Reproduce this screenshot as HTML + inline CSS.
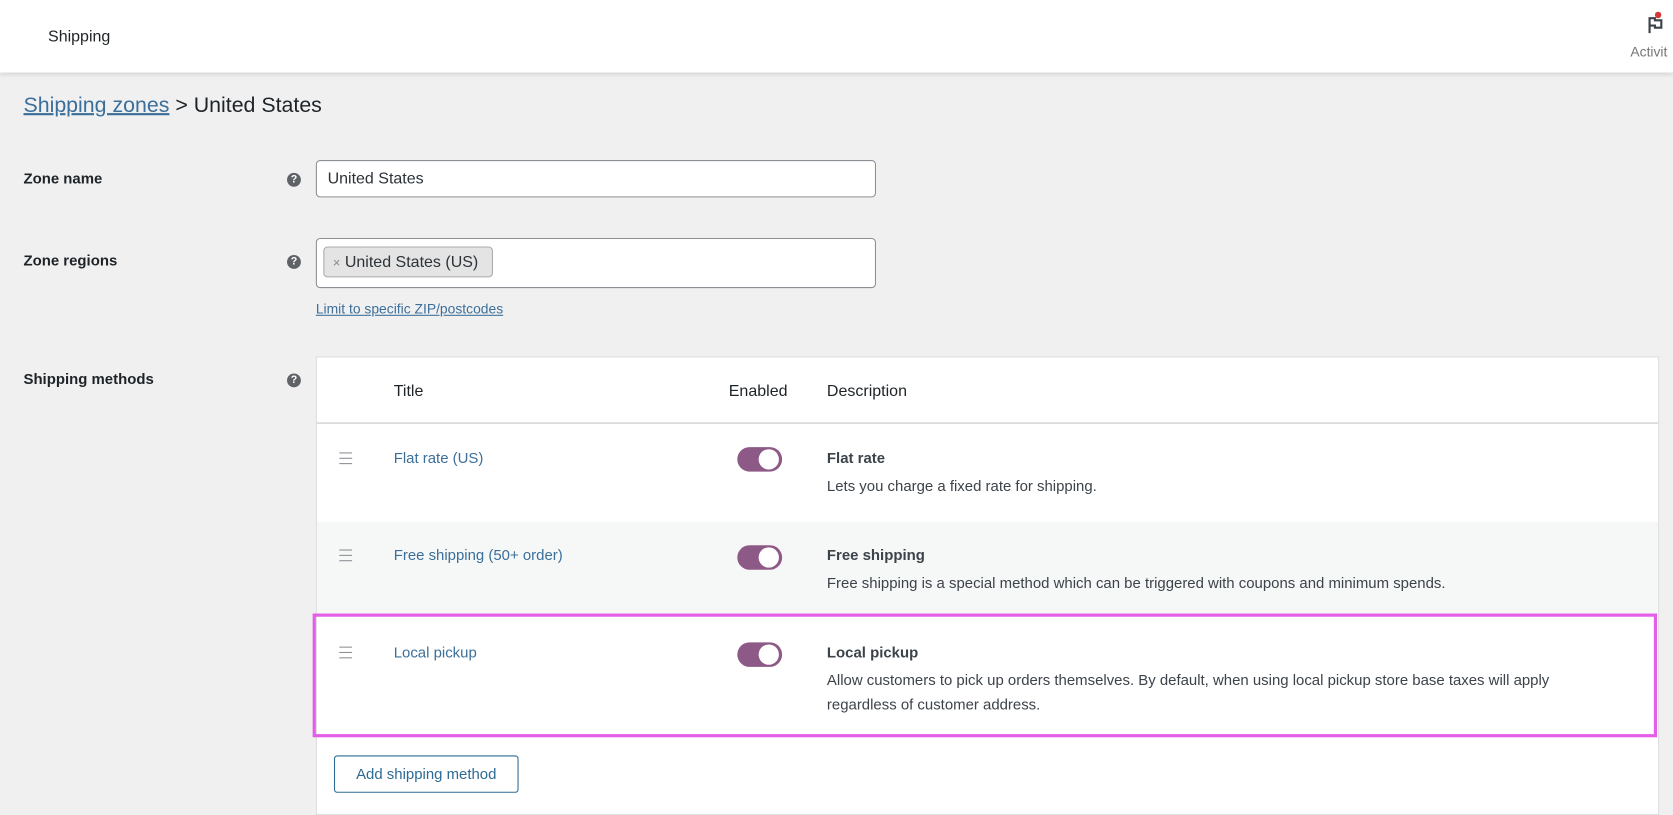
<!DOCTYPE html>
<html><head><meta charset="utf-8"><style>
html,body{margin:0;padding:0;width:1673px;height:809px;overflow:hidden;background:#f0f0f1}
#w{position:absolute;left:0;top:0;width:1568px;height:758px;transform:scale(1.067);transform-origin:0 0;font-family:"Liberation Sans",sans-serif;color:#1d2327}
.a{position:absolute}
.hdr{left:0;top:0;width:1568px;height:68px;background:#fff;box-shadow:0 2px 4px rgba(0,0,0,.12)}
.lbl{font-size:14px;font-weight:bold;color:#1d2327}
.q{width:13px;height:13px;border-radius:50%;background:#5f6368;color:#fff;font-size:10px;font-weight:bold;text-align:center;line-height:13px}
.inp{background:#fff;border:1px solid #8c8f94;border-radius:4px;box-sizing:border-box}
.tl{font-size:14px;color:#3b6f9a}
.dt{font-size:14px;font-weight:bold;color:#3c434a}
.dd{font-size:14px;color:#3c434a;line-height:23px}
.tg{width:42px;height:23px;border-radius:12px;background:#8d5a87}
.tg:after{content:"";position:absolute;right:3px;top:2px;width:19px;height:19px;border-radius:50%;background:#fff}
.dr{width:12px;height:9px;border-top:1.5px solid #8c8f94;border-bottom:1.5px solid #8c8f94}
.dr:after{content:"";position:absolute;left:0;right:0;top:3.5px;height:1.5px;background:#8c8f94}
</style></head><body><div id="w">
<div class="a hdr"></div>
<div class="a" style="left:45px;top:26px;font-size:15px">Shipping</div>
<svg class="a" style="left:1540px;top:8px" width="24" height="26" viewBox="0 0 24 26"><path d="M6 8v15M6 9h5v2h6v7h-6v-2H6" fill="none" stroke="#3c434a" stroke-width="2"/><circle cx="14" cy="6" r="3" fill="#d63638"/></svg>
<div class="a" style="left:1528px;top:41px;font-size:13px;color:#757575">Activit</div>
<div class="a" style="left:22px;top:88px;font-size:20px"><span style="color:#3b6f9a;text-decoration:underline">Shipping zones</span> &gt; United States</div>
<div class="a lbl" style="left:22px;top:159px">Zone name</div>
<div class="a lbl" style="left:22px;top:236px">Zone regions</div>
<div class="a lbl" style="left:22px;top:347px">Shipping methods</div>
<div class="a q" style="left:269px;top:162px">?</div>
<div class="a q" style="left:269px;top:239px">?</div>
<div class="a q" style="left:269px;top:350px">?</div>
<div class="a inp" style="left:296px;top:150px;width:525px;height:35px;padding:8px 10px;font-size:15px;color:#2c3338">United States</div>
<div class="a inp" style="left:296px;top:223px;width:525px;height:47px"></div>
<div class="a" style="left:303px;top:231px;width:159px;height:29px;box-sizing:border-box;background:#e4e4e4;border:1px solid #aaa;border-radius:4px;font-size:15px;padding:5px 0 0 8px;color:#2c3338;white-space:nowrap"><span style="color:#888;font-size:12px">×</span> United States (US)</div>
<div class="a" style="left:296px;top:282px;font-size:13px;color:#3b6f9a;text-decoration:underline">Limit to specific ZIP/postcodes</div>
<div class="a" style="left:296px;top:334px;width:1259px;height:430px;background:#fff;border:1px solid #dcdcde;box-sizing:border-box"></div>
<div class="a" style="left:297px;top:396px;width:1257px;height:1px;background:#c3c4c7"></div>
<div class="a" style="left:297px;top:489px;width:1257px;height:88px;background:#f6f7f7"></div>
<div class="a" style="left:369px;top:358px;font-size:15px">Title</div>
<div class="a" style="left:683px;top:358px;font-size:15px">Enabled</div>
<div class="a" style="left:775px;top:358px;font-size:15px">Description</div>
<div class="a dr" style="left:318px;top:424px"></div>
<div class="a tl" style="left:369px;top:421px">Flat rate (US)</div>
<div class="a tg" style="left:691px;top:419px"></div>
<div class="a dt" style="left:775px;top:421px">Flat rate</div>
<div class="a dd" style="left:775px;top:444px">Lets you charge a fixed rate for shipping.</div>
<div class="a dr" style="left:318px;top:515px"></div>
<div class="a tl" style="left:369px;top:512px">Free shipping (50+ order)</div>
<div class="a tg" style="left:691px;top:511px"></div>
<div class="a dt" style="left:775px;top:512px">Free shipping</div>
<div class="a dd" style="left:775px;top:535px">Free shipping is a special method which can be triggered with coupons and minimum spends.</div>
<div class="a" style="left:293px;top:575px;width:1260px;height:116px;border:3px solid #e45fe8;box-sizing:border-box"></div>
<div class="a dr" style="left:318px;top:606px"></div>
<div class="a tl" style="left:369px;top:603px">Local pickup</div>
<div class="a tg" style="left:691px;top:602px"></div>
<div class="a dt" style="left:775px;top:603px">Local pickup</div>
<div class="a dd" style="left:775px;top:626px;width:745px">Allow customers to pick up orders themselves. By default, when using local pickup store base taxes will apply regardless of customer address.</div>
<div class="a" style="left:313px;top:708px;width:173px;height:35px;box-sizing:border-box;border:1px solid #2d6a94;border-radius:3px;color:#2d6a94;font-size:14px;text-align:center;line-height:33px">Add shipping method</div>
</div></body></html>
